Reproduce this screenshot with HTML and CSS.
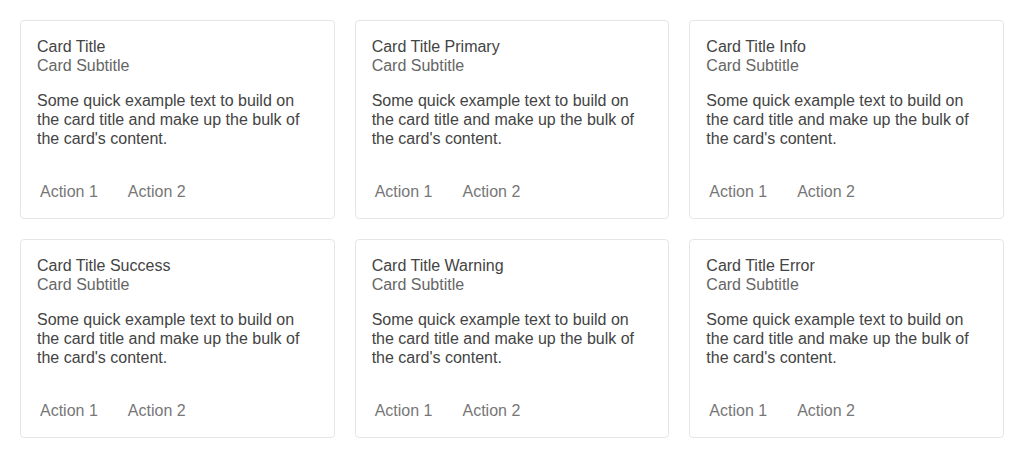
FILE: index.html
```html
<!DOCTYPE html>
<html lang="en">
<head>
<meta charset="utf-8">
<title>Cards</title>
<link rel="stylesheet" href="styles.css">
</head>
<body>
<div class="grid">
  <div class="card">
    <div class="card-body">
      <div class="title">Card Title</div>
      <div class="subtitle">Card Subtitle</div>
      <p class="text">Some quick example text to build on the card title and make up the bulk of the card's content.</p>
    </div>
    <div class="actions"><button class="btn">Action 1</button><button class="btn">Action 2</button></div>
  </div>
  <div class="card">
    <div class="card-body">
      <div class="title">Card Title Primary</div>
      <div class="subtitle">Card Subtitle</div>
      <p class="text">Some quick example text to build on the card title and make up the bulk of the card's content.</p>
    </div>
    <div class="actions"><button class="btn">Action 1</button><button class="btn">Action 2</button></div>
  </div>
  <div class="card">
    <div class="card-body">
      <div class="title">Card Title Info</div>
      <div class="subtitle">Card Subtitle</div>
      <p class="text">Some quick example text to build on the card title and make up the bulk of the card's content.</p>
    </div>
    <div class="actions"><button class="btn">Action 1</button><button class="btn">Action 2</button></div>
  </div>
  <div class="card">
    <div class="card-body">
      <div class="title">Card Title Success</div>
      <div class="subtitle">Card Subtitle</div>
      <p class="text">Some quick example text to build on the card title and make up the bulk of the card's content.</p>
    </div>
    <div class="actions"><button class="btn">Action 1</button><button class="btn">Action 2</button></div>
  </div>
  <div class="card">
    <div class="card-body">
      <div class="title">Card Title Warning</div>
      <div class="subtitle">Card Subtitle</div>
      <p class="text">Some quick example text to build on the card title and make up the bulk of the card's content.</p>
    </div>
    <div class="actions"><button class="btn">Action 1</button><button class="btn">Action 2</button></div>
  </div>
  <div class="card">
    <div class="card-body">
      <div class="title">Card Title Error</div>
      <div class="subtitle">Card Subtitle</div>
      <p class="text">Some quick example text to build on the card title and make up the bulk of the card's content.</p>
    </div>
    <div class="actions"><button class="btn">Action 1</button><button class="btn">Action 2</button></div>
  </div>
</div>
</body>
</html>
```
FILE: styles.css
```css
html, body {
  margin: 0;
  padding: 0;
  background: #ffffff;
}
body {
  padding: 20px;
  font-family: "Liberation Sans", Arial, sans-serif;
  font-size: 16px;
  line-height: 19px;
  color: #444444;
}
.grid {
  display: grid;
  grid-template-columns: repeat(3, 1fr);
  gap: 20px;
}
.card {
  border: 1px solid #e6e6e6;
  border-radius: 4px;
  background: #fff;
  display: flex;
  flex-direction: column;
}
.card-body {
  padding: 16px 16px 17px;
}
.title {
  color: #444444;
}
.subtitle {
  color: #666666;
}
.text {
  margin: 16px 0 0;
  color: #444444;
}
.actions {
  display: flex;
  gap: 8px;
  padding: 8px;
}
.btn {
  font: inherit;
  line-height: 19px;
  height: 37px;
  padding: 0 11px;
  border: 0;
  background: transparent;
  color: #777777;
  cursor: pointer;
}
```
